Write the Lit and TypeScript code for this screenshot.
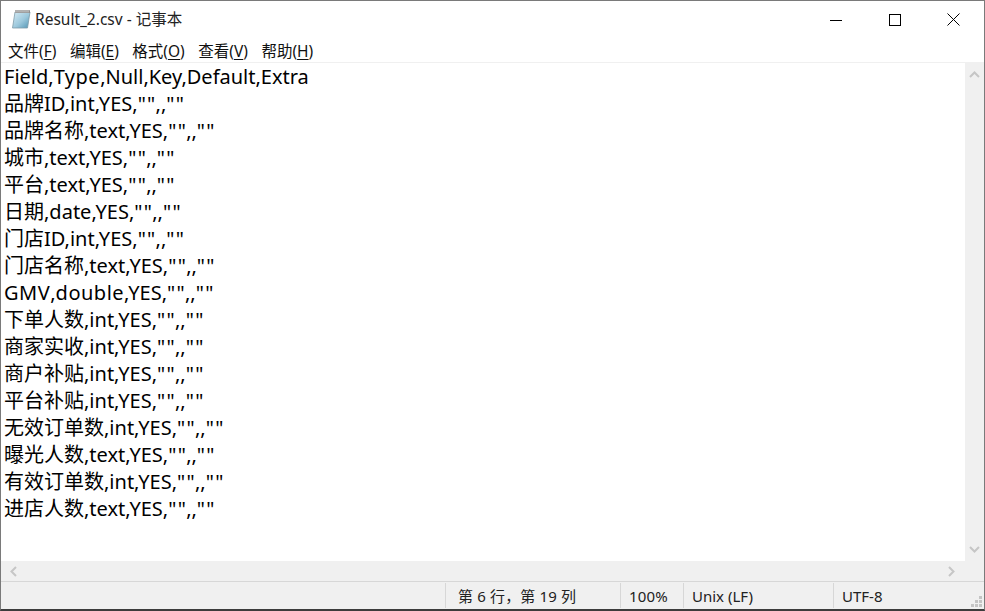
import { LitElement, html, css } from "lit";
import { customElement } from "lit/decorators.js";

const LINES = [
  'Field,<Type>,Null,Key,Default,Extra',
  '品牌ID,int,YES,"",,""',
  '品牌名称,text,YES,"",,""',
  '城市,text,YES,"",,""',
  '平台,text,YES,"",,""',
  '日期,date,YES,"",,""',
  '门店ID,int,YES,"",,""',
  '门店名称,text,YES,"",,""',
  '<GMV>,<double>,YES,"",,""',
  '下单人数,int,YES,"",,""',
  '商家实收,int,YES,"",,""',
  '商户补贴,int,YES,"",,""',
  '平台补贴,int,YES,"",,""',
  '无效订单数,int,YES,"",,""',
  '曝光人数,text,YES,"",,""',
  '有效订单数,int,YES,"",,""',
  '进店人数,text,YES,"",,""',
];
const MENUS: [string, string][] = [["文件", "F"], ["编辑", "E"], ["格式", "O"], ["查看", "V"], ["帮助", "H"]];

@customElement("app-root")
export class AppRoot extends LitElement {
  static styles = css`
    :host { display: block; width: 985px; height: 611px; overflow: hidden; }
    .win {
      box-sizing: border-box; width: 985px; height: 611px; background: #fff;
      border: 1px solid #7a7a7a; border-bottom: 2px solid #3c3c3c;
      display: flex; flex-direction: column;
      font-family: "Noto Sans", "Noto Sans CJK SC", sans-serif; color: #000;
    }
    .title { height: 38px; display: flex; align-items: flex-start; flex: none; padding-left: 10px; box-sizing: border-box; }
    .icon { margin-top: 8px; }
    .title .name { font-size: 15.5px; line-height: 20px; margin-top: 8px; margin-left: 4px; color: #222; }
    .caps { margin-left: auto; display: flex; padding-right: 1px; }
    .cap { width: 59px; height: 37px; display: flex; align-items: center; justify-content: center; }
    .menu { height: 23px; display: flex; flex: none; padding-left: 7px; gap: 13.5px; font-size: 15.5px; align-items: center; box-sizing: border-box; padding-bottom: 1px; color: #111; }
    .menu u { text-underline-offset: 2px; }
    .sep { height: 1px; flex: none; background: #f0f0f0; }
    .mid { flex: 1; display: flex; min-height: 0; }
    .text { flex: 1; padding: 0 0 0 3px; font-size: 20px; line-height: 27px; overflow: hidden; }
    .line { height: 27px; white-space: pre; }
    .q { letter-spacing: 1.3px; margin-right: -1px; }
    .w { letter-spacing: .5px; }
    .vbar { width: 19px; flex: none; background: #f0f0f0; display: flex; flex-direction: column; justify-content: space-between; align-items: center; padding: 6px 0; box-sizing: border-box; }
    .hbar { height: 20px; flex: none; background: #f0f0f0; display: flex; align-items: center; justify-content: space-between; padding: 0 27px 0 7px; }
    .status { height: 28px; flex: none; background: #f0f0f0; border-top: 1px solid #d7d7d7; display: flex; font-size: 15px; color: #222; position: relative; box-sizing: border-box; }
    .cell { border-left: 1px solid #d7d7d7; margin: 1px 0; display: flex; align-items: center; box-sizing: border-box; white-space: pre; }
    .c0 { width: 444px; border: none; }
    .c1 { width: 175px; padding-left: 12px; letter-spacing: .15px; }
    .c2 { width: 63px; padding-left: 8px; letter-spacing: .2px; }
    .c3 { width: 150px; padding-left: 8px; }
    .c4 { flex: 1; padding-left: 8px; }
    .grip { position: absolute; right: 1px; bottom: 1px; }
    svg { display: block; }
  `;
  private chev(d: string) {
    return html`<svg width="11" height="11" viewBox="0 0 11 11"><path d=${d} fill="none" stroke="#c6c6c6" stroke-width="2"/></svg>`;
  }
  private line(s: string) {
    const parts = s.split(/(""|<[^>]+>)/);
    return html`<div class="line">${parts.map((p) =>
      p === '""' ? html`<span class="q">""</span>`
      : p.startsWith("<") ? html`<span class="w">${p.slice(1, -1)}</span>`
      : p)}</div>`;
  }
  render() {
    return html`<div class="win">
      <div class="title">
        <svg class="icon" width="20" height="20" viewBox="0 0 20 20">
          <defs><linearGradient id="n" x1="0" y1="0" x2="1" y2="1"><stop offset="0" stop-color="#d6ebf5"/><stop offset=".55" stop-color="#9cc8dc"/><stop offset="1" stop-color="#4f93b3"/></linearGradient></defs>
          <path d="M4 3H19L16.5 19H1.5Z" fill="url(#n)" stroke="#7d9aa8" stroke-width=".8"/>
          <path d="M4 1.2H19V4H4Z" fill="#8e8e8e"/>
          <path d="M5 1.5V3.5M7 1.5V3.5M9 1.5V3.5M11 1.5V3.5M13 1.5V3.5M15 1.5V3.5M17 1.5V3.5" stroke="#e8e8e8" stroke-width=".8"/>
        </svg>
        <span class="name">Result_2.csv - 记事本</span>
        <div class="caps">
          <div class="cap"><svg width="12" height="12" viewBox="0 0 12 12"><path d="M0 6.5H12" stroke="#000"/></svg></div>
          <div class="cap"><svg width="12" height="12" viewBox="0 0 12 12"><rect x=".5" y=".5" width="11" height="11" fill="none" stroke="#000"/></svg></div>
          <div class="cap"><svg width="13" height="13" viewBox="0 0 13 13"><path d="M.5 .5L12.5 12.5M12.5 .5L.5 12.5" stroke="#000"/></svg></div>
        </div>
      </div>
      <div class="menu">${MENUS.map(([n, k]) => html`<span>${n}(<u>${k}</u>)</span>`)}</div>
      <div class="sep"></div>
      <div class="mid">
        <div class="text">${LINES.map((l) => this.line(l))}</div>
        <div class="vbar">${this.chev("M1 8L5.5 3.5L10 8")}${this.chev("M1 3L5.5 7.5L10 3")}</div>
      </div>
      <div class="hbar">${this.chev("M8 1L3.5 5.5L8 10")}${this.chev("M3 1L7.5 5.5L3 10")}</div>
      <div class="status">
        <div class="cell c0"></div>
        <div class="cell c1">第 6 行，第 19 列</div>
        <div class="cell c2">100%</div>
        <div class="cell c3">Unix (LF)</div>
        <div class="cell c4">UTF-8</div>
        <svg class="grip" width="12" height="12" viewBox="0 0 12 12" fill="#c4c4c4"><rect x="8" y="0" width="3" height="3"/><rect x="4" y="4" width="3" height="3"/><rect x="8" y="4" width="3" height="3"/><rect x="0" y="8" width="3" height="3"/><rect x="4" y="8" width="3" height="3"/><rect x="8" y="8" width="3" height="3"/></svg>
      </div>
    </div>`;
  }
}
